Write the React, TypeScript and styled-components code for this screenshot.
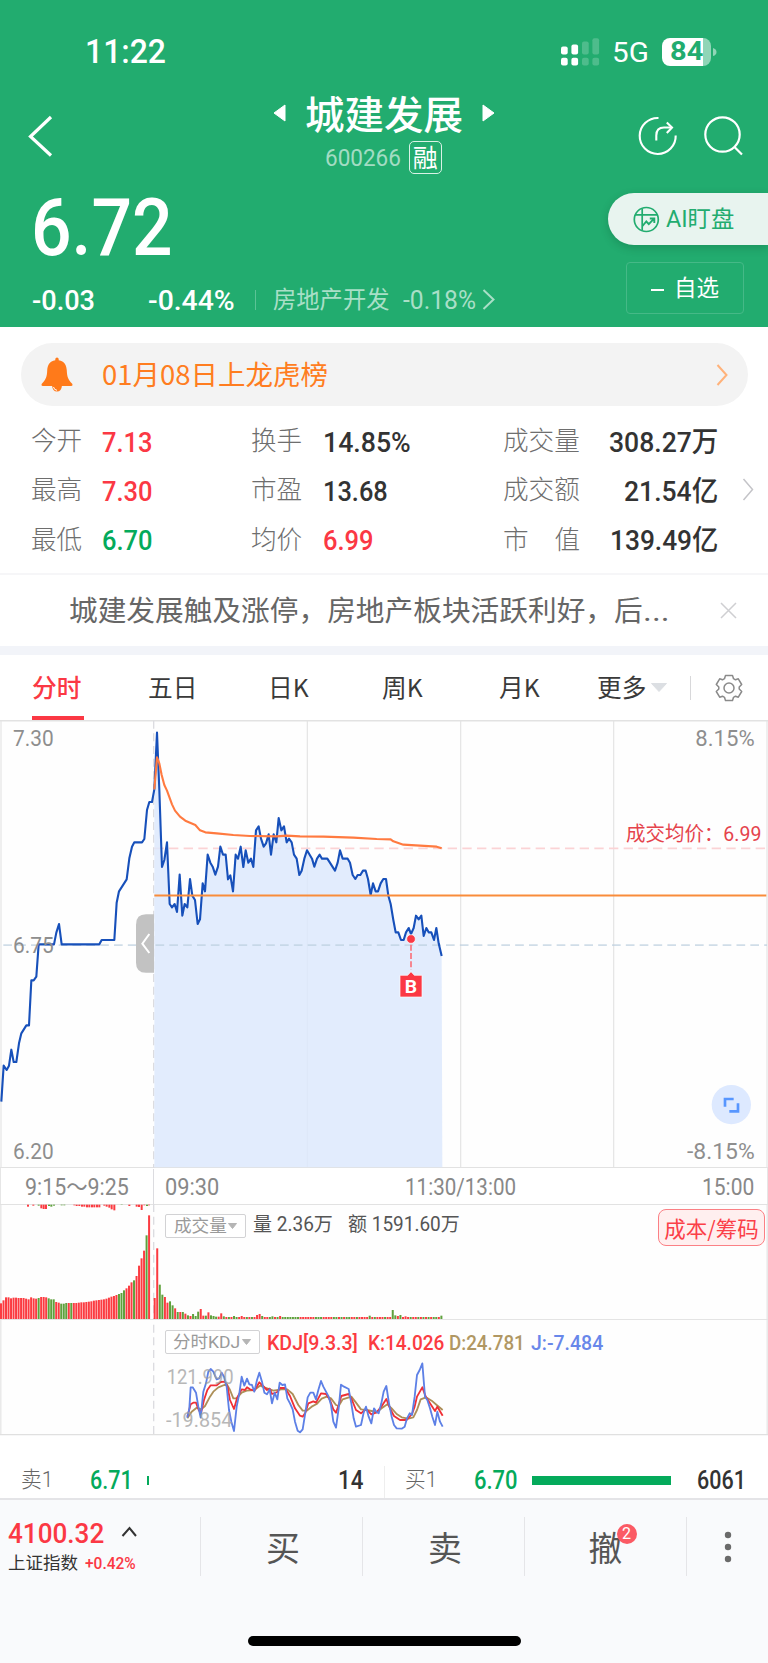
import React, { useLayoutEffect, useRef, useState } from "react";
import styled, { createGlobalStyle } from "styled-components";

const GREEN = "#22ac6f";
const RED = "#fb3844";
const SANS = `Roboto, "Noto Sans CJK SC", sans-serif`;
const CJK = `"Noto Sans CJK SC", sans-serif`;

const Global = createGlobalStyle`
  * { box-sizing: border-box; }
  body { margin: 0; background: #fff; font-family: ${SANS}; color: #333; }
  svg { display: block; flex: none; }
`;

/* ---------- condensed text: keeps its string inside a fixed column width ---------- */
const FitBox = styled.span<{ $w: number; $size: number; $weight: number; $color: string; $ml: number; $dy: number; $cjk: boolean }>`
  display: block;
  flex: none;
  width: ${(p) => p.$w}px;
  margin-left: ${(p) => p.$ml}px;
  margin-top: ${(p) => p.$dy}px;
  font-family: ${(p) => (p.$cjk ? CJK : SANS)};
  font-size: ${(p) => p.$size}px;
  font-weight: ${(p) => p.$weight};
  line-height: 1.2;
  color: ${(p) => p.$color};
  white-space: pre;
`;
const FitInner = styled.span`
  display: inline-block;
  transform-origin: 0 50%;
`;
type FitProps = { w: number; size: number; weight?: number; color?: string; ml?: number; dy?: number; cjk?: boolean; children: string };
function Fit({ w, size, weight = 400, color = "inherit", ml = 0, dy = 0, cjk = false, children }: FitProps) {
  const ref = useRef<HTMLSpanElement>(null);
  const [k, setK] = useState(1);
  useLayoutEffect(() => {
    if (ref.current) setK(w / ref.current.offsetWidth);
  }, [w, size, children]);
  return (
    <FitBox $w={w} $size={size} $weight={weight} $color={color} $ml={ml} $dy={dy} $cjk={cjk}>
      <FitInner ref={ref} style={{ transform: `scaleX(${k})` }}>{children}</FitInner>
    </FitBox>
  );
}

const Page = styled.main`
  width: 768px;
  height: 1663px;
  display: flex;
  flex-direction: column;
  overflow: hidden;
  background: #fff;
`;

/* ---------- header ---------- */
const Header = styled.header`
  height: 327px;
  flex: none;
  background: ${GREEN};
  color: #fff;
`;
const StatusBar = styled.div`
  display: flex;
  align-items: center;
  height: 90px;
  padding: 13px 51px 0 85px;
`;
const StatusRight = styled.div`
  display: flex;
  align-items: center;
  margin-left: auto;
`;
const Battery = styled.div`
  display: flex;
  align-items: center;
  width: 49px;
  height: 28px;
  margin: 0 2px 0 13px;
  padding-left: 8px;
  border-radius: 8px;
  background: linear-gradient(to right, #fff 41.5px, #90d5b7 41.5px);
`;
const NavBar = styled.div`
  display: grid;
  grid-template-columns: 240px 288px 1fr;
  align-items: center;
  height: 92px;
`;
const TitleCol = styled.div`
  display: flex;
  flex-direction: column;
  height: 92px;
`;
const TitleRow = styled.div`
  display: flex;
  align-items: center;
  height: 46px;
  padding-left: 33px;
`;
const CodeRow = styled.div`
  display: flex;
  align-items: center;
  height: 43px;
  padding-left: 85px;
`;
const MarginTag = styled.span`
  width: 33px;
  height: 33px;
  margin-left: 8px;
  border: 1.5px solid #d9f2e6;
  border-radius: 5px;
  font: 25px/29px ${CJK};
  text-align: center;
  text-indent: -0.5px;
`;
const NavIcons = styled.div`
  display: flex;
  align-items: center;
  gap: 26px;
  padding-left: 110px;
`;
const Quote = styled.div`
  display: flex;
  justify-content: space-between;
  height: 145px;
`;
const PriceCol = styled.div``;
const PriceLine = styled.div`
  display: flex;
  align-items: center;
  height: 90px;
  padding-left: 31px;
`;
const ChangeLine = styled.div`
  display: flex;
  align-items: center;
  height: 55px;
  padding-left: 32px;
`;
const ThinRule = styled.i<{ $h: number; $color: string; $m?: string }>`
  width: 1px;
  flex: none;
  height: ${(p) => p.$h}px;
  margin: ${(p) => p.$m ?? "0"};
  background: ${(p) => p.$color};
`;
const ActionCol = styled.div`
  display: flex;
  flex-direction: column;
  align-items: flex-end;
  padding-top: 11px;
`;
const AiPill = styled.button`
  display: flex;
  align-items: center;
  width: 160px;
  height: 52px;
  padding: 0 0 0 25px;
  border: 0;
  border-radius: 26px 0 0 26px;
  background: #e8f4ef;
  box-shadow: 0 3px 8px rgba(0, 60, 30, 0.22);
`;
const WatchButton = styled.button`
  display: flex;
  align-items: center;
  width: 118px;
  height: 52px;
  margin: 17px 24px 0 0;
  padding: 0 0 0 24px;
  border: 1px solid #45b987;
  border-radius: 4px;
  background: transparent;
  color: #fff;
`;
const Minus = styled.i`
  width: 13px;
  height: 2px;
  margin-top: 3px;
  background: #fff;
`;

/* ---------- notice, figures, news ---------- */
const Notice = styled.div`
  display: flex;
  align-items: center;
  height: 63px;
  flex: none;
  margin: 16px 20px 0 21px;
  padding: 0 20px;
  border-radius: 32px;
  background: #f3f3f3;
`;
const Push = styled.i`
  flex: 1;
`;
const FigureBlock = styled.section`
  display: flex;
  align-items: center;
  height: 169px;
  flex: none;
  padding: 0 13px 0 31px;
  border-bottom: 2px solid #f6f6f8;
`;
const FigureGrid = styled.div`
  display: grid;
  grid-template-columns: 220px 252px 215px;
  grid-auto-rows: 49.3px;
  width: 711px;
`;
const Figure = styled.div`
  display: flex;
  align-items: center;
`;
const FigureLabel = styled.span<{ $w: number; $spread?: boolean }>`
  display: flex;
  flex: none;
  justify-content: ${(p) => (p.$spread ? "space-between" : "flex-start")};
  width: ${(p) => p.$w}px;
  margin-top: -2px;
  font: 300 25.6px/30px ${CJK};
  color: #6e6e6e;
  white-space: pre;
`;
const NewsRow = styled.div`
  display: flex;
  align-items: center;
  height: 71px;
  flex: none;
  padding: 0 31px 0 69px;
  color: #666;
`;
const Band = styled.div`
  height: 9px;
  flex: none;
  background: #f2f4f9;
`;

/* ---------- tabs ---------- */
const Tabs = styled.nav`
  display: flex;
  align-items: center;
  height: 65px;
  flex: none;
`;
const Tab = styled.button<{ $x: number; $on?: boolean }>`
  position: relative;
  width: ${(p) => p.$x}px;
  height: 65px;
  padding: 0 0 4px;
  border: 0;
  background: none;
  font: ${(p) => (p.$on ? 500 : 400)} 24.7px ${CJK};
  text-align: left;
  white-space: nowrap;
  color: ${(p) => (p.$on ? RED : "#3a3a3a")};
  &::after {
    content: "";
    display: ${(p) => (p.$on ? "block" : "none")};
    position: absolute;
    left: 0;
    bottom: 0;
    width: 52px;
    height: 4px;
    background: ${RED};
  }
`;

/* ---------- charts ---------- */
const Panel = styled.section<{ $h: number }>`
  position: relative;
  height: ${(p) => p.$h}px;
  flex: none;
`;
const AxisRow = styled.div`
  display: flex;
  align-items: center;
  height: 36px;
  flex: none;
  padding-right: 13px;
  border: solid #e6e6e6;
  border-width: 0 1px;
  color: #888;
`;
const PanelBar = styled.div<{ $top: number }>`
  position: absolute;
  top: ${(p) => p.$top}px;
  left: 165px;
  right: 0;
  display: flex;
  align-items: center;
  height: 24px;
`;
const Picker = styled.button<{ $w: number }>`
  display: flex;
  align-items: center;
  gap: 2px;
  width: ${(p) => p.$w}px;
  height: 24px;
  padding: 0 0 0 7px;
  border: 1px solid #d2d2d4;
  border-radius: 2px;
  background: #fff;
  color: #9a9a9a;
`;
const ChipButton = styled.button`
  position: absolute;
  top: 5px;
  right: 3px;
  width: 107px;
  height: 37px;
  padding: 0;
  border: 1px solid #fb8085;
  border-radius: 8px;
  background: #ffefef;
  color: #fb4048;
  font: 21.5px/32px ${CJK};
`;

/* ---------- order book, dock ---------- */
const Book = styled.div`
  display: grid;
  grid-template-columns: 384px 384px;
  align-items: end;
  height: 64px;
  flex: none;
  border-bottom: 2px solid #e4e4e7;
`;
const BookSide = styled.div`
  display: flex;
  align-items: center;
  height: 32px;
  padding: 0 21px 3px 21px;
  & + & {
    border-left: 1px solid #eee;
    padding-right: 22px;
  }
`;
const Depth = styled.i<{ $w: number }>`
  width: ${(p) => p.$w}px;
  height: 9px;
  margin: -1px 0 0 14px;
  background: #04aa5b;
`;
const Dock = styled.footer`
  flex: 1;
  display: flex;
  flex-direction: column;
  justify-content: space-between;
  padding: 17px 0;
  background: #f9fafc;
`;
const DockRow = styled.div`
  display: flex;
  height: 59px;
`;
const IndexBox = styled.div`
  width: 200px;
  padding-left: 8px;
`;
const IndexLine = styled.div<{ $h: number }>`
  display: flex;
  align-items: center;
  height: ${(p) => p.$h}px;
`;
const DockItem = styled.button<{ $w: number }>`
  display: flex;
  align-items: center;
  justify-content: center;
  width: ${(p) => p.$w}px;
  height: 59px;
  padding: 0 0 0 3px;
  border: 0;
  border-left: 1px solid #e5e5e8;
  background: none;
  font: 34px/56px ${CJK};
  color: #555;
`;
const BadgeAnchor = styled.span`
  position: relative;
  margin-left: -3px;
`;
const Badge = styled.b`
  position: absolute;
  top: 5px;
  right: -14px;
  width: 20px;
  height: 20px;
  border-radius: 10px;
  background: #fb5a64;
  color: #fff;
  font: 400 16px/20px ${SANS};
  text-align: center;
`;
const HomeBar = styled.div`
  align-self: center;
  width: 273px;
  height: 10px;
  border-radius: 5px;
  background: #000;
`;

/* ---------- icons ---------- */
const Chevron = ({ w, h, sw, color, ml = 0 }: { w: number; h: number; sw: number; color: string; ml?: number }) => (
  <svg width={w + ml} height={h} viewBox={`${-ml} 0 ${w + ml} ${h}`} fill="none" stroke={color} strokeWidth={sw}>
    <path d={`M1.5 1 L${w - 1.5} ${h / 2} L1.5 ${h - 1}`} />
  </svg>
);
const BackIcon = () => (
  <svg width="54" height="42" viewBox="0 0 54 42" fill="none" stroke="#fff" strokeWidth="3.2">
    <path d="M51 2 L30.5 21.5 L51 40.5" />
  </svg>
);
const SignalIcon = () => (
  <svg width="39" height="28" viewBox="0 0 39 28" fill="#fff">
    <rect x="0" y="8.5" width="6.7" height="8" rx="2" />
    <rect x="10.4" y="6.5" width="6.7" height="10" rx="2" />
    <rect x="0" y="19.7" width="6.7" height="7.8" rx="2" />
    <rect x="10.4" y="19.7" width="6.7" height="7.8" rx="2" />
    <g opacity="0.2">
      <rect x="21" y="3.5" width="6.7" height="13" rx="2" />
      <rect x="31.4" y="0.3" width="6.7" height="16.2" rx="2" />
      <rect x="21" y="19.7" width="6.7" height="7.8" rx="2" />
      <rect x="31.4" y="19.7" width="6.7" height="7.8" rx="2" />
    </g>
  </svg>
);
const ShareIcon = () => (
  <svg width="40" height="40" viewBox="0 0 40 40" fill="none" stroke="#fff" strokeWidth="2.1">
    <path d="M20.5 2 A18 18 0 1 0 37.7 19.5" />
    <path d="M18.3 24.5 V19.5 Q18.3 11.5 26 11.5 H33.5" />
    <path d="M28.8 6.5 L34 11.5 L28.8 17" />
  </svg>
);
const SearchIcon = () => (
  <svg width="40" height="40" viewBox="0 0 40 40" fill="none" stroke="#fff" strokeWidth="2.2">
    <circle cx="18.5" cy="18.5" r="17.2" />
    <path d="M30.5 31 L38 38.5" />
  </svg>
);
const AiIcon = () => (
  <svg width="27" height="27" viewBox="0 0 27 27" fill="none" stroke={GREEN} strokeWidth="1.7">
    <circle cx="13.3" cy="13.5" r="12" />
    <path d="M2 8.8 H24.5 M9.2 2.5 V24.5" />
    <path d="M9.5 20 L13.3 15.5 L15.8 18.2 L21 12.7 M16.8 12.5 H21.3 V17" strokeWidth="1.9" />
  </svg>
);
const BellIcon = () => (
  <svg width="32" height="35" viewBox="0 0 32 35" fill="#ff7a1a">
    <path d="M14.3 2.2 a1.7 1.7 0 0 1 3.4 0 V3.2 C23.5 4 25.6 8.5 25.8 13.5 C26 19.5 27 22.5 31.2 26.7 Q32.2 29 30 29 H2 Q-0.2 29 0.8 26.7 C5 22.5 6 19.5 6.2 13.5 C6.4 8.5 8.5 4 14.3 3.2 Z" />
    <path d="M11 28.5 H21 Q20.5 34.5 16 34.5 Q11.5 34.5 11 28.5 Z" />
    <path d="M12.5 30 Q13 33 16 33.3" stroke="#fff" strokeWidth="1" fill="none" />
  </svg>
);
const GearIcon = () => (
  <svg width="28" height="28" viewBox="-14 -14 28 28" fill="none" stroke="#8a8a8a" strokeWidth="1.5" strokeLinejoin="round">
    <circle r="5" />
    <path d="M-3.5 -12.6 H3.5 L4.5 -9.3 L6.5 -8.2 L9.3 -9.2 L12.7 -3.5 L10.2 -1 V1 L12.7 3.5 L9.3 9.2 L6.5 8.2 L4.5 9.3 L3.5 12.6 H-3.5 L-4.5 9.3 L-6.5 8.2 L-9.3 9.2 L-12.7 3.5 L-10.2 1 V-1 L-12.7 -3.5 L-9.3 -9.2 L-6.5 -8.2 L-4.5 -9.3 Z" />
  </svg>
);
const Tri = ({ w, h, color, dir = "down" }: { w: number; h: number; color: string; dir?: "down" | "left" | "right" }) => {
  const d = { down: `M0.5 0.5 H${w - 0.5} L${w / 2} ${h - 0.5} Z`, left: `M${w - 1} 1 V${h - 1} L1 ${h / 2} Z`, right: `M1 1 V${h - 1} L${w - 1} ${h / 2} Z` }[dir];
  return (
    <svg width={w} height={h} fill={color} stroke={color} strokeLinejoin="round">
      <path d={d} />
    </svg>
  );
};

/* ---------- data, in thirds of a pixel ---------- */
const PRE = "4,1355 11,1247 20,1260 27,1247 34,1199 41,1236 49,1236 57,1180 64,1150 79,1126 87,1126 94,991 101,991 109,980 116,883 162,883 169,848 177,822 185,883 298,883 305,870 343,870 350,758 357,724 380,688 388,625 396,590 403,577 426,577 433,567 441,480 448,456 456,456 463,418";
const DAY = "463,418 471,248 478,420 486,651 493,630 501,577 509,762 516,772 524,762 531,786 539,674 547,797 554,762 562,772 570,687 577,737 585,750 593,822 600,808 608,700 615,724 623,614 631,638 638,650 646,674 654,650 661,590 669,614 677,614 684,688 691,676 699,724 707,614 714,626 722,590 730,651 737,601 745,638 753,626 760,651 768,541 776,529 783,566 791,590 798,580 806,553 813,614 821,553 829,577 836,504 844,541 852,529 860,577 867,566 875,577 882,614 890,626 898,675 905,662 913,626 921,601 936,626 943,650 951,626 959,614 966,626 982,626 1005,662 1013,638 1020,601 1028,626 1043,626 1050,638 1058,675 1066,687 1073,675 1081,675 1089,662 1097,662 1104,687 1112,735 1119,700 1127,724 1134,724 1142,700 1150,687 1158,687 1165,737 1172,762 1180,810 1187,847 1195,847 1203,870 1211,870 1218,847 1226,834 1233,852 1241,834 1248,797 1256,808 1264,797 1271,858 1279,834 1286,847 1294,847 1302,870 1309,834 1316,880 1325,918";
const AVG = "463,418 471,322 478,340 485,375 493,405 501,422 516,463 525,482 540,500 556,512 586,525 600,541 616,547 650,550 700,555 750,558 830,559 860,557 900,559 970,560 1060,563 1130,567 1172,568 1180,574 1210,584 1260,587 1310,590 1325,595";
const KDJ_J = "112,683 118,655 122,592 128,592 138,608 145,650 152,683 160,605 168,580 175,545 182,537 190,545 200,568 208,565 215,548 222,560 230,590 237,660 244,695 252,723 260,650 268,610 275,560 283,587 291,566 298,583 306,585 313,605 321,570 328,548 336,575 343,608 351,613 359,598 366,640 374,608 382,628 389,578 397,585 405,583 412,625 420,640 428,658 435,695 443,722 450,727 458,718 466,668 473,622 481,608 490,608 498,628 505,600 513,573 520,590 528,605 536,620 543,645 550,695 558,713 566,655 573,584 582,590 596,597 604,640 611,685 618,710 633,705 641,668 648,650 656,680 664,700 672,655 679,665 686,670 694,640 701,605 709,588 717,640 725,680 732,705 740,715 755,716 764,710 771,685 779,670 786,675 794,620 801,555 809,540 817,520 825,620 832,630 840,655 847,680 855,705 862,665 870,695 878,710";
const KDJ_K = "112,680 122,643 130,638 138,638 147,662 154,665 162,630 172,600 182,586 200,586 212,576 225,575 233,592 240,630 252,657 262,622 275,598 285,600 291,592 300,598 313,602 328,577 336,585 351,600 359,596 366,612 382,606 390,594 405,594 420,618 435,655 450,677 458,680 466,668 475,640 490,634 498,638 513,610 528,612 540,630 550,658 558,668 566,645 574,618 596,612 606,630 618,660 633,670 648,657 664,673 680,667 694,650 709,627 720,655 732,678 750,690 770,690 786,672 794,650 801,620 817,592 828,622 840,640 855,663 862,650 878,677";
const KDJ_D = "112,685 125,665 140,653 154,658 165,648 180,620 190,605 205,592 230,582 240,600 250,625 260,625 275,608 290,602 313,600 330,587 345,593 370,602 395,598 412,598 428,612 445,645 458,662 470,662 485,650 500,642 515,626 530,620 543,625 558,645 566,648 578,628 604,620 618,638 633,658 650,660 665,663 680,667 695,655 712,643 725,655 740,672 755,682 775,686 790,682 801,660 812,628 828,622 845,632 860,645 878,660";

const PRE_VOL = [340, 331, 322, 322, 325, 323, 323, 324, 324, 324, 326, 328, 322, 325, 326, 324, 321, 321, 322, 325, 328, 328, 336, 338, 341, 341, 339, 339, 339, 339, 339, 338, 337, 337, 336, 335, 334, 332, 331, 330, 329, 328, 326, 323, 320, 318, 315, 312, 309, 301, 295, 287, 277, 271, 258, 227, 205, 182, 136, 76];
const PRE_GREEN = new Set([15, 19, 20, 21, 24, 25, 26, 28, 47, 48, 49, 53, 58]);
const UNMATCHED: [number, number, number?][] = [[84, 50], [100, 47], [116, 47, 1], [124, 55], [131, 57], [138, 57], [147, 48, 1], [154, 50, 1], [162, 47, 1], [185, 46, 1], [193, 46, 1], [223, 46], [230, 48], [238, 48], [246, 50], [253, 50], [261, 52], [268, 52], [276, 52], [283, 52], [291, 52], [298, 52], [313, 47], [320, 50], [328, 53], [335, 58], [343, 61], [365, 45, 1], [388, 48], [410, 50], [417, 51], [425, 60], [433, 46], [441, 48, 1], [447, 46]];
const DAY_HEAD: [number, number][] = [[324, 0], [175, 0], [284, 1], [314, 1], [321, 0], [338, 0], [334, 1], [346, 1], [355, 0], [366, 1], [366, 0], [366, 1], [371, 0], [376, 1], [378, 0], [372, 1], [378, 1], [365, 1], [357, 0], [377, 0], [377, 1], [367, 0], [376, 1], [378, 1], [380, 1], [380, 0], [370, 0], [379, 1]];
const DAY_PEAKS: Record<number, [number, number]> = { 31: [378, 1], 34: [378, 0], 40: [375, 0], 41: [372, 0], 42: [378, 1], 46: [379, 1], 49: [378, 0], 84: [377, 1], 93: [360, 1], 94: [376, 1], 95: [378, 0], 96: [375, 1], 98: [379, 0], 112: [377, 1] };
const TAIL_GREEN = new Set([29, 32, 36, 38, 45, 48, 50, 51, 52, 53, 54, 55, 56, 63, 64, 65, 70, 71, 73, 75, 76, 79, 86, 90, 100, 103, 105, 107, 109, 110]);
const dayBar = (i: number): [number, number] => DAY_HEAD[i] ?? DAY_PEAKS[i] ?? [381, TAIL_GREEN.has(i) ? 1 : 0];
const barColor = (g: unknown) => (g ? "#5ea13c" : "#fb3b41");
const shift = (s: string, dx: number) => s.split(" ").map((p) => { const [x, y] = p.split(","); return `${+x + dx},${y}`; }).join(" ");

type LabelProps = { x: number; y: number; w: number; size?: number; fill?: string; weight?: number; children: string };
const Label = ({ x, y, w, size = 67, fill = "#8e8e8e", weight = 400, children }: LabelProps) => (
  <text x={x} y={y} textLength={w} lengthAdjust="spacingAndGlyphs" fontSize={size} fill={fill} fontWeight={weight} fontFamily={SANS}>{children}</text>
);

function PriceChart() {
  return (
    <svg width="768" height="448" viewBox="0 210 2304 1344">
      <rect x="0" y="210" width="2304" height="1347" fill="#fefefe" />
      <g stroke="#e4e4e4" strokeWidth="3.5">
        <path d="M922 210 V1553 M1382 210 V1553 M1841 210 V1553" />
        <path d="M0 212 H2304 M0 1553 H2304" strokeWidth="4.5" stroke="#e2e2e2" />
        <path d="M3 212 V1557 M2301 212 V1557" />
      </g>
      <path d="M461 212 V1554" stroke="#dcdce0" strokeWidth="4" strokeDasharray="24 14" />
      <path d="M463 595 H2301" stroke="#fbd3d5" strokeWidth="5" strokeDasharray="28 16" />
      <polygon points={`${DAY} 1327,1552 463,1552`} fill="#dde8fd" fillOpacity="0.84" />
      <path d="M10 885.5 H2301" stroke="#bdd0e0" strokeWidth="5" strokeDasharray="26 15.5" opacity="0.7" />
      <Label x={39} y={288} w={122}>7.30</Label>
      <Label x={39} y={1528} w={122}>6.20</Label>
      <Label x={2086} y={288} w={178}>8.15%</Label>
      <Label x={2061} y={1528} w={203}>-8.15%</Label>
      <path d="M462 793 H438 Q408 793 408 824 V938 Q408 968 438 968 H462 Z" fill="#c2c2c2" />
      <path d="M448 852 L427 881 L448 909" fill="none" stroke="#fff" strokeWidth="6" />
      <g fill="none" strokeLinejoin="round" strokeWidth="6.3">
        <polyline points={PRE} stroke="#1750ba" />
        <polyline points={DAY} stroke="#1750ba" />
        <polyline points={AVG} stroke="#ff7a40" />
        <path d="M463 736.5 H2299" stroke="#f98c3a" />
      </g>
      <Label x={39} y={908} w={122}>6.75</Label>
      <path d="M1233 884 V960" stroke="#f9737c" strokeWidth="5" strokeDasharray="18 7" />
      <circle cx="1233" cy="867" r="13" fill="#fb3844" stroke="#fff" strokeWidth="2" />
      <path d="M1200 976 H1223 L1233 965 L1243 976 H1266 V1041 H1200 Z" fill="#fb3844" stroke="#fff" strokeWidth="2" />
      <Label x={1214} y={1029} w={37} size={55} weight={700} fill="#fff">B</Label>
      <Label x={1878} y={573} w={406} size={60} weight={400} fill="#e5434c">成交均价：6.99</Label>
      <circle cx="2194" cy="1364" r="59" fill="#dde9ff" />
      <path d="M2175 1370 V1347 H2201 M2188 1384 H2214 V1360" fill="none" stroke="#5796ff" strokeWidth="8" />
    </svg>
  );
}

function VolumeChart() {
  return (
    <svg width="768" height="115" viewBox="0 42 2304 345">
      <rect x="0" y="42" width="2304" height="345" fill="#fefefe" />
      <path d="M0 43.5 H2304 M2.5 42 V387 M2301.5 42 V387" stroke="#e2e2e2" strokeWidth="3.5" />
      <path d="M461 42 V387" stroke="#dcdce0" strokeWidth="4" strokeDasharray="24 14" />
      {UNMATCHED.map(([x, y, g]) => <rect key={x} x={x - 3} y={44} width={6} height={y - 44} fill={barColor(g)} />)}
      {PRE_VOL.map((y, i) => <rect key={i} x={i * 7.53} y={y} width={6} height={387 - y} fill={barColor(PRE_GREEN.has(i))} />)}
      {Array.from({ length: 113 }, (_, i) => {
        const [y, g] = dayBar(i);
        return <rect key={i} x={461 + i * 7.68} y={y} width={6} height={387 - y} fill={barColor(g)} />;
      })}
    </svg>
  );
}

function KdjChart() {
  return (
    <svg width="768" height="117" viewBox="0 387 2304 351">
      <rect x="0" y="387" width="2304" height="348" fill="#fefefe" />
      <path d="M0 388.5 H2304 M2.5 388 V734 M2301.5 388 V734" stroke="#e4e4e4" strokeWidth="3.5" />
      <path d="M0 734 H2304" stroke="#e0e0e0" strokeWidth="4" />
      <path d="M461 404 V734" stroke="#dcdce0" strokeWidth="4" strokeDasharray="24 14" />
      <g fill="none" strokeLinejoin="round" strokeWidth="5.5">
        <polyline points={shift(KDJ_D, 450)} stroke="#ad8f58" />
        <polyline points={shift(KDJ_K, 450)} stroke="#f02f35" />
        <polyline points={shift(KDJ_J, 450)} stroke="#5d80e6" />
      </g>
      <g opacity="0.75">
        <Label x={500} y={583} w={201} size={59} fill="#a0a0a0">121.990</Label>
        <Label x={498} y={711} w={199} size={59} fill="#a0a0a0">-19.854</Label>
      </g>
    </svg>
  );
}

const FIGURES: { label: string; value: string; w: number; color?: string }[] = [
  { label: "今开", value: "7.13", w: 51, color: RED },
  { label: "换手", value: "14.85%", w: 88 },
  { label: "成交量", value: "308.27万", w: 109 },
  { label: "最高", value: "7.30", w: 51, color: RED },
  { label: "市盈", value: "13.68", w: 65 },
  { label: "成交额", value: "21.54亿", w: 94 },
  { label: "最低", value: "6.70", w: 51, color: "#04aa5b" },
  { label: "均价", value: "6.99", w: 51, color: RED },
  { label: "市值", value: "139.49亿", w: 108 },
];

export default function App() {
  return (
    <Page>
      <Global />
      <Header>
        <StatusBar>
          <Fit w={81} size={33.5} weight={500} dy={2}>11:22</Fit>
          <StatusRight>
            <SignalIcon />
            <Fit w={37} size={28} weight={400} ml={12} dy={2}>5G</Fit>
            <Battery><Fit w={33} size={25.5} weight={700} color={GREEN}>84</Fit></Battery>
            <svg width="4" height="8" fill="#90d5b7"><path d="M0 0 Q3.5 1 3.5 4 Q3.5 7 0 8 Z" /></svg>
          </StatusRight>
        </StatusBar>
        <NavBar>
          <BackIcon />
          <TitleCol>
            <TitleRow>
              <Tri w={13} h={18} color="#fff" dir="left" />
              <Fit w={158} size={39} weight={500} ml={19} cjk dy={-1}>城建发展</Fit>
              <Push />
              <Tri w={13} h={18} color="#fff" dir="right" />
              <svg width="33" height="2" />
            </TitleRow>
            <CodeRow>
              <Fit w={76} size={24} color="#a3dcc3" dy={2}>600266</Fit>
              <MarginTag>融</MarginTag>
            </CodeRow>
          </TitleCol>
          <NavIcons><ShareIcon /><SearchIcon /></NavIcons>
        </NavBar>
        <Quote>
          <PriceCol>
            <PriceLine><Fit w={142} size={79} weight={500} dy={3}>6.72</Fit></PriceLine>
            <ChangeLine>
              <Fit w={63} size={28} weight={500} dy={2}>-0.03</Fit>
              <Fit w={87} size={28} weight={500} ml={53} dy={2}>-0.44%</Fit>
              <ThinRule $h={20} $color="#5cc396" $m="0 17px 0 20px" />
              <Fit w={117} size={23.5} color="#a9dfc7" dy={2}>房地产开发</Fit>
              <Fit w={73} size={25} color="#a9dfc7" ml={13} dy={2}>-0.18%</Fit>
              <Chevron w={13} h={21} sw={2} color="#a9dfc7" ml={6} />
            </ChangeLine>
          </PriceCol>
          <ActionCol>
            <AiPill>
              <AiIcon />
              <Fit w={68} size={23} ml={6} color={GREEN} dy={2}>AI盯盘</Fit>
            </AiPill>
            <WatchButton><Minus /><Fit w={45} size={22.5} ml={10}>自选</Fit></WatchButton>
          </ActionCol>
        </Quote>
      </Header>

      <Notice>
        <BellIcon />
        <Fit w={226} size={27} color="#ff7d20" ml={29} cjk>01月08日上龙虎榜</Fit>
        <Push />
        <Chevron w={12} h={22} sw={2} color="#ffb27a" />
      </Notice>

      <FigureBlock>
        <FigureGrid>
          {FIGURES.map((f, i) => (
            <Figure key={f.label}>
              <FigureLabel $w={i % 3 === 2 ? 77 : 51} $spread={f.label === "市值"}>
                {f.label === "市值" ? [<span key="a">市</span>, <span key="b">值</span>] : f.label}
              </FigureLabel>
              {i % 3 === 2 && <Push />}
              <Fit w={f.w} size={28.5} weight={500} color={f.color} ml={i % 3 === 0 ? 20 : i % 3 === 1 ? 21 : 0} dy={5}>{f.value}</Fit>
            </Figure>
          ))}
        </FigureGrid>
        <Chevron w={12} h={23} sw={1.5} color="#c4c4c8" />
      </FigureBlock>

      <NewsRow>
        <Fit w={574} size={28.7} dy={1}>城建发展触及涨停，房地产板块活跃利好，后</Fit>
        <Fit w={27} size={28.7} dy={1}>...</Fit>
        <Push />
        <svg width="17" height="17" stroke="#cfcfd2" strokeWidth="1.5"><path d="M1 1 L16 16 M16 1 L1 16" /></svg>
      </NewsRow>
      <Band />

      <Tabs>
        <svg width="32" height="1" />
        <Tab $x={116} $on>分时</Tab>
        <Tab $x={120}>五日</Tab>
        <Tab $x={114}>日K</Tab>
        <Tab $x={117}>周K</Tab>
        <Tab $x={98}>月K</Tab>
        <Tab $x={54}>更多</Tab>
        <Tri w={16} h={9} color="#dcdfe3" />
        <ThinRule $h={24} $color="#d8d8da" $m="0 24px 0 23px" />
        <GearIcon />
      </Tabs>

      <Panel $h={448}><PriceChart /></Panel>
      <AxisRow>
        <Fit w={104} size={23} ml={24} dy={3}>9:15～9:25</Fit>
        <ThinRule $h={35} $color="#dcdce0" $m="0 11px 0 24px" />
        <Fit w={54} size={23} dy={3}>09:30</Fit>
        <Fit w={111} size={23} ml={186} dy={3}>11:30/13:00</Fit>
        <Push />
        <Fit w={52} size={23} dy={3}>15:00</Fit>
      </AxisRow>
      <Panel $h={115}>
        <VolumeChart />
        <PanelBar $top={10}>
          <Picker $w={81}><Fit w={53} size={17.3} dy={1}>成交量</Fit><Tri w={9} h={6} color="#b5b5b5" /></Picker>
          <Fit w={80} size={19.5} weight={400} color="#555" ml={7} dy={-2}>量 2.36万</Fit>
          <Fit w={112} size={19.5} weight={400} color="#555" ml={15} dy={-2}>额 1591.60万</Fit>
        </PanelBar>
        <ChipButton>成本/筹码</ChipButton>
      </Panel>
      <Panel $h={117}>
        <KdjChart />
        <PanelBar $top={11}>
          <Picker $w={95}><Fit w={67} size={17.3}>分时KDJ</Fit><Tri w={9} h={6} color="#b5b5b5" /></Picker>
          <Fit w={91} size={20} weight={500} color="#fb3b41" ml={7} dy={1}>KDJ[9.3.3]</Fit>
          <Fit w={76} size={20} weight={500} color="#fb3b41" ml={10} dy={1}>K:14.026</Fit>
          <Fit w={76} size={20} weight={500} color="#b09763" ml={5} dy={1}>D:24.781</Fit>
          <Fit w={72} size={20} weight={500} color="#6887ea" ml={6} dy={1}>J:-7.484</Fit>
        </PanelBar>
      </Panel>

      <Book>
        <BookSide>
          <Fit w={32} size={22} weight={300} color="#666">卖1</Fit>
          <Fit w={43} size={25} weight={500} color="#04aa5b" ml={37} dy={1}>6.71</Fit>
          <Depth $w={2} />
          <Push />
          <Fit w={25} size={25} weight={500} dy={1}>14</Fit>
        </BookSide>
        <BookSide>
          <Fit w={32} size={22} weight={300} color="#666" ml={-1}>买1</Fit>
          <Fit w={44} size={25} weight={500} color="#04aa5b" ml={37} dy={1}>6.70</Fit>
          <Depth $w={139} />
          <Push />
          <Fit w={49} size={25} weight={500} dy={1}>6061</Fit>
        </BookSide>
      </Book>

      <Dock>
        <DockRow>
          <IndexBox>
            <IndexLine $h={32}>
              <Fit w={96} size={28} weight={500} color={RED} dy={2}>4100.32</Fit>
              <svg width="34" height="14" fill="none" stroke="#333" strokeWidth="2"><path d="M18.5 10 L25.5 2 L32 10" /></svg>
            </IndexLine>
            <IndexLine $h={27}>
              <Fit w={70} size={17.5} dy={1}>上证指数</Fit>
              <Fit w={51} size={17} weight={500} color={RED} ml={7} dy={2}>+0.42%</Fit>
            </IndexLine>
          </IndexBox>
          <DockItem $w={162}>买</DockItem>
          <DockItem $w={162}>卖</DockItem>
          <DockItem $w={162}><BadgeAnchor>撤<Badge>2</Badge></BadgeAnchor></DockItem>
          <DockItem $w={79}>
            <svg width="8" height="32" fill="#6a6a6a"><circle cx="4" cy="4" r="3.2" /><circle cx="4" cy="16" r="3.2" /><circle cx="4" cy="28" r="3.2" /></svg>
          </DockItem>
        </DockRow>
        <HomeBar />
      </Dock>
    </Page>
  );
}
